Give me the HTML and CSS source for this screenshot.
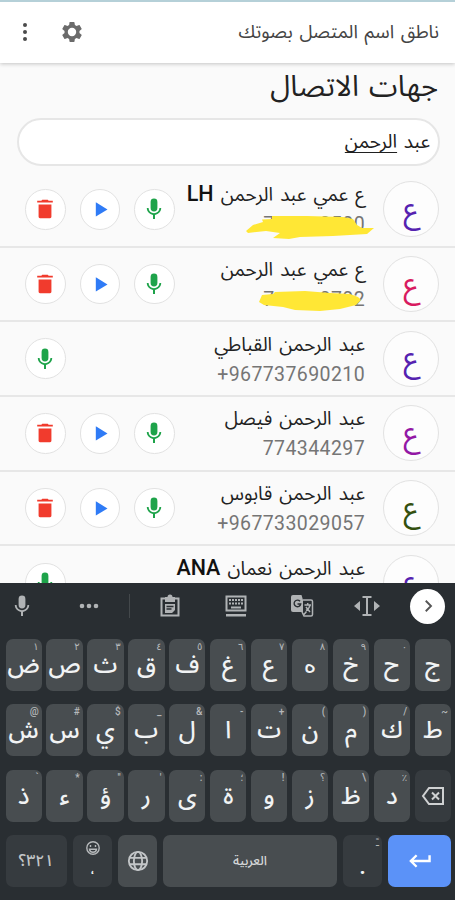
FILE: index.html
```html
<!DOCTYPE html>
<html lang="ar" dir="rtl">
<head>
<meta charset="utf-8">
<title>جهات الاتصال</title>
<link rel="stylesheet" href="styles.css">
</head>
<body>
<svg class="defs" width="0" height="0">
  <symbol id="mic" viewBox="0 0 24 24"><rect x="8.6" y="1.5" width="6.8" height="13" rx="3.4"/><path d="M19.2 11h-1.8c0 3-2.5 5.2-5.4 5.2S6.600 14 6.600 11H4.800c0 3.500 2.700 6.300 6.200 6.900V22h2v-4.100c3.500-.6 6.200-3.400 6.200-6.900z"/></symbol>
  <symbol id="play" viewBox="0 0 24 24"><path d="M7 4v17l14-8.500z"/></symbol>
  <symbol id="trash" viewBox="0 0 24 24"><path d="M5 7h14v13.500a1.500 1.500 0 0 1-1.500 1.500h-11A1.500 1.500 0 0 1 5 20.500zM3.500 3H8l1-1.200h6L16 3h4.500v2h-17z"/></symbol>
</svg>
<div class="screen">
  <header class="bar">
    <span class="bar-title">ناطق اسم المتصل بصوتك</span>
    <svg class="gear" viewBox="0 0 24 24"><path d="M19.430 12.980c.04-.32.07-.64.07-.98s-.03-.66-.07-.98l2.110-1.650c.19-.15.24-.42.12-.64l-2-3.460c-.12-.22-.39-.3-.61-.22l-2.490 1c-.52-.4-1.080-.73-1.690-.98l-.38-2.650A.49.49 0 0 0 14 2h-4c-.25 0-.46.18-.49.42l-.38 2.650c-.61.25-1.170.59-1.690.98l-2.490-1c-.23-.09-.49 0-.61.22l-2 3.460c-.13.22-.07.49.12.64l2.110 1.650c-.04.32-.07.65-.07.98s.03.66.07.98l-2.110 1.650c-.19.15-.24.42-.12.64l2 3.460c.12.22.39.3.61.22l2.490-1c.52.4 1.080.73 1.690.98l.38 2.650c.03.24.24.42.49.42h4c.25 0 .46-.18.49-.42l.38-2.650c.61-.25 1.170-.59 1.690-.98l2.490 1c.23.09.49 0 .61-.22l2-3.460c.12-.22.07-.49-.12-.64zM12 16.200a4.200 4.200 0 1 1 0-8.400 4.200 4.200 0 0 1 0 8.400z"/></svg>
    <svg class="more" viewBox="0 0 6 20"><circle cx="3" cy="3" r="2"/><circle cx="3" cy="10" r="2"/><circle cx="3" cy="17" r="2"/></svg>
  </header>
  <h1>جهات الاتصال</h1>
  <div class="search"><span>عبد <u>الرحمن</u></span></div>
  <main class="list">
    <div class="row">
      <span class="avatar violet">ع</span>
      <div class="who"><div class="name">ع عمي عبد الرحمن <b>LH</b></div><div class="phone" dir="ltr">7<i></i>0500</div>
        <svg class="mark" viewBox="0 0 130 26"><path d="M1 15 8 9 18 6 17 3.500 27 3 27 0 62 0 98 1 108 3 112 9 117 12 129 12 122 18 88 20 55 21 44 23 28 22 35 17 21 15 3 17z"/></svg></div>
      <div class="actions"><span><svg class="green"><use href="#mic"/></svg></span><span><svg class="blue"><use href="#play"/></svg></span><span><svg class="red"><use href="#trash"/></svg></span></div>
    </div>
    <div class="row">
      <span class="avatar pink">ع</span>
      <div class="who"><div class="name">ع عمي عبد الرحمن</div><div class="phone" dir="ltr">7<i></i>0702</div>
        <svg class="mark" viewBox="0 0 130 26"><path d="M14 11 17 4 28 3 30 1 60 0 85 2 105 3 113 6 116 9 111 14 95 18 75 20 50 19 38 16 19 14z"/></svg></div>
      <div class="actions"><span><svg class="green"><use href="#mic"/></svg></span><span><svg class="blue"><use href="#play"/></svg></span><span><svg class="red"><use href="#trash"/></svg></span></div>
    </div>
    <div class="row">
      <span class="avatar violet">ع</span>
      <div class="who"><div class="name">عبد الرحمن القباطي</div><div class="phone" dir="ltr">+967737690210</div></div>
      <div class="actions"><span><svg class="green"><use href="#mic"/></svg></span></div>
    </div>
    <div class="row">
      <span class="avatar purple">ع</span>
      <div class="who"><div class="name">عبد الرحمن فيصل</div><div class="phone" dir="ltr">774344297</div></div>
      <div class="actions"><span><svg class="green"><use href="#mic"/></svg></span><span><svg class="blue"><use href="#play"/></svg></span><span><svg class="red"><use href="#trash"/></svg></span></div>
    </div>
    <div class="row">
      <span class="avatar olive">ع</span>
      <div class="who"><div class="name">عبد الرحمن قابوس</div><div class="phone" dir="ltr">+967733029057</div></div>
      <div class="actions"><span><svg class="green"><use href="#mic"/></svg></span><span><svg class="blue"><use href="#play"/></svg></span><span><svg class="red"><use href="#trash"/></svg></span></div>
    </div>
    <div class="row">
      <span class="avatar violet">ع</span>
      <div class="who"><div class="name">عبد الرحمن نعمان <b>ANA</b></div></div>
      <div class="actions"><span><svg class="green"><use href="#mic"/></svg></span></div>
    </div>
  </main>
  <section class="keyboard" dir="ltr">
    <div class="tools">
      <svg class="t-mic" viewBox="0 0 24 24"><use href="#mic"/></svg>
      <svg class="t-dots" viewBox="0 0 20 6"><circle cx="3" cy="3" r="2.300"/><circle cx="10" cy="3" r="2.300"/><circle cx="17" cy="3" r="2.300"/></svg>
      <span class="sep"></span>
      <svg viewBox="0 0 24 24"><path class="line" d="M3.500 4.500h17v17h-17z"/><path d="M7 3h2.500a2.500 2.500 0 0 1 5 0H17v5H7zM7 10h10v6l-3 3H7z"/><path class="cut" d="M8.500 12.500h7M8.500 15h5"/></svg>
      <svg viewBox="0 0 24 24"><path class="line" d="M2.500 2.500h19v14h-19z"/><path d="M5 5h2v2H5zm3 0h2v2H8zm3 0h2v2h-2zm3 0h2v2h-2zm3 0h2v2h-2zM5 8.500h2v2H5zm3 0h2v2H8zm3 0h2v2h-2zm3 0h2v2h-2zm3 0h2v2h-2zM7 12.500h10v2H7zM2 20h20v2.500H2z"/></svg>
      <svg viewBox="0 0 24 24"><path d="M3 1h8.500l1.500 5v12H3a2 2 0 0 1-2-2V3a2 2 0 0 1 2-2z"/><path class="line thin" d="M13 6h8a1.500 1.500 0 0 1 1.500 1.500v13A1.500 1.500 0 0 1 21 22h-7l-2-4M14.500 11h6.500M17.700 9v2M20 11c-.5 3-2 4.500-4 5.500M16 13l4 5M13.500 21l3-3.500"/><path class="cut" d="M10 7.300A3.300 3.300 0 1 0 10.700 10H7.500"/></svg>
      <svg class="t-cursor" viewBox="0 0 26 24"><path class="line" d="M8.500 3h9M8.500 21h9M13 3v18"/><path d="M6 7v10l-6-5zM20 7v10l6-5z"/></svg>
      <span class="next"><svg viewBox="0 0 24 24"><path d="M9 5l7 7-7 7"/></svg></span>
    </div>
    <div class="keys">
      <span class="key"><sup>١</sup>ض</span><span class="key"><sup>٢</sup>ص</span><span class="key"><sup>٣</sup>ث</span><span class="key"><sup>٤</sup>ق</span><span class="key"><sup>٥</sup>ف</span><span class="key"><sup>٦</sup>غ</span><span class="key"><sup>٧</sup>ع</span><span class="key heh"><sup>٨</sup>ه</span><span class="key"><sup>٩</sup>خ</span><span class="key"><sup>٠</sup>ح</span><span class="key">ج</span>
    </div>
    <div class="keys">
      <span class="key"><sup>@</sup>ش</span><span class="key"><sup>#</sup>س</span><span class="key"><sup>$</sup>ي</span><span class="key"><sup>_</sup>ب</span><span class="key"><sup>&amp;</sup>ل</span><span class="key"><sup>-</sup>ا</span><span class="key"><sup>+</sup>ت</span><span class="key"><sup>(</sup>ن</span><span class="key"><sup>)</sup>م</span><span class="key"><sup>/</sup>ك</span><span class="key"><sup>~</sup>ط</span>
    </div>
    <div class="keys">
      <span class="key"><sup>`</sup>ذ</span><span class="key"><sup>*</sup>ء</span><span class="key"><sup>"</sup>ؤ</span><span class="key"><sup>'</sup>ر</span><span class="key"><sup>:</sup>ى</span><span class="key"><sup>؛</sup>ة</span><span class="key"><sup>!</sup>و</span><span class="key"><sup>؟</sup>ز</span><span class="key"><sup>\</sup>ظ</span><span class="key"><sup>٪</sup>د</span><span class="key dark"><svg class="back" viewBox="0 0 24 20"><path d="M8 2h14v16H8L2 10zM11 6.500l7 7M18 6.500l-7 7"/></svg></span>
    </div>
    <div class="keys bottom">
      <span class="key dark num">؟٣٢١</span>
      <span class="key dark emoji"><svg viewBox="0 0 16 16"><circle cx="8" cy="8" r="6.200"/><path d="M5.500 5v2M10.500 5v2M4.500 9.300h7c-.3 2-1.700 3-3.500 3s-3.200-1-3.500-3z"/></svg><em>،</em></span>
      <span class="key"><svg class="globe" viewBox="0 0 24 24"><circle cx="12" cy="12" r="10"/><ellipse cx="12" cy="12" rx="4.500" ry="10"/><path d="M2.800 8.500h18.400M2.800 15.500h18.400"/></svg></span>
      <span class="key space">العربية</span>
      <span class="key dark dot"><sup>ـً</sup>.</span>
      <span class="key enter"><svg viewBox="0 0 24 16"><path d="M22.500 2v6H3M9 2L3 8l6 6"/></svg></span>
    </div>
  </section>
</div>
</body>
</html>
```
FILE: styles.css
```css
* { box-sizing: border-box; }
body { margin: 0; font-family: Roboto, "Noto Sans Arabic", "DejaVu Sans", sans-serif; color: #202020; }
.defs { position: absolute; }
svg { flex: none; display: block; }
.screen { width: 455px; height: 900px; overflow: hidden; background: #fafafa; display: flex; flex-direction: column; }
.bar { height: 63px; flex: none; background: #fff; border-top: 2px solid #b5d0d8; box-shadow: 0 1px 4px rgba(0,0,0,.22); display: flex; align-items: center; padding: 0 16px 2px 22px; }
.bar-title { font-size: 18.700px; word-spacing: 2px; color: #444; margin-left: auto; white-space: nowrap; }
.gear { width: 24px; height: 24px; fill: #6b6b6b; margin-left: 32px; }
.more { width: 6px; height: 20px; fill: #4b4b4b; }
h1 { margin: 0; height: 55px; flex: none; padding: 0 17px; font-size: 29px; word-spacing: 3px; font-weight: 400; line-height: 46px; white-space: nowrap; color: #222; }
.search { height: 48px; flex: none; margin: 0 15px 0 17px; border: 2px solid #e6e6e6; border-radius: 24px; background: #fff; display: flex; align-items: center; padding: 0 8px; font-size: 19px; word-spacing: 2px; }
.search u { text-decoration-thickness: 1px; text-underline-offset: 4px; }
.list { height: 416.500px; flex: none; padding-top: 7px; overflow: hidden; }
.row { height: 74.700px; border-bottom: 2px solid #e7e7e7; display: flex; align-items: center; padding: 0 16px 0 25px; }
.avatar { width: 56px; height: 56px; flex: none; border: 1.500px solid #e2e2e2; border-radius: 50%; background: #fdfdfd; display: flex; align-items: center; justify-content: center; font-size: 30px; }
.violet { color: #5522b0; }
.pink { color: #d81b60; }
.purple { color: #9318a5; }
.olive { color: #34500f; }
.who { width: 190px; height: 66px; flex: none; margin-right: 18px; position: relative; }
.name { font-size: 19px; word-spacing: 2.500px; height: 38px; line-height: 38px; white-space: nowrap; color: #222; }
.name b { font-size: 21.500px; font-weight: 500; line-height: 1; color: #111; }
.phone { font-size: 19.500px; height: 22px; line-height: 22px; text-align: right; letter-spacing: .4px; color: #757575; }
.phone i { display: inline-block; width: 45px; }
.mark { position: absolute; right: -10px; top: 40px; width: 130px; height: 26px; fill: #ffe735; }
.actions { display: flex; gap: 14px; margin-right: auto; }
.actions span { width: 40.500px; height: 40.500px; border: 1.500px solid #e2e2e2; border-radius: 50%; background: #fff; display: flex; align-items: center; justify-content: center; }
.actions svg { width: 24px; height: 24px; }
.green { fill: #1ea34a; }
.blue { fill: #2f7bf6; padding: 2px; }
.red { fill: #f13b2d; padding: 1px; }
.keyboard { flex: 1; background: #292e32; padding: 0 4px 0 5.500px; color: #f1f3f4; }
.tools { height: 47px; margin-bottom: 9.500px; display: flex; align-items: center; fill: #b0b3b5; }
.tools > svg { width: 24px; height: 24px; margin-right: 42px; }
.tools > .t-mic { margin: 0 45px 0 4.500px; }
.tools > .t-dots { width: 20px; height: 6px; margin-right: 30px; }
.sep { width: 1px; height: 24px; background: #43484b; margin-right: 28px; }
.tools > .t-cursor { width: 26px; margin: 0 30px 0 -2px; }
.line { fill: none; stroke: #b0b3b5; stroke-width: 2; }
.thin { stroke-width: 1.500; }
.cut { fill: none; stroke: #292e32; stroke-width: 1.400; }
.next { width: 35px; height: 35px; flex: none; border-radius: 50%; background: #fff; display: flex; align-items: center; justify-content: center; }
.next svg { width: 18px; fill: none; stroke: #555; stroke-width: 2.500; }
.keys { display: grid; grid-template-columns: repeat(11, 1fr); gap: 4.700px; height: 52px; margin-bottom: 13.300px; }
.key { position: relative; background: #484d50; border-radius: 7px; display: flex; align-items: center; justify-content: center; font-size: 24px; font-weight: 500; line-height: 30px; min-width: 0; }
.heh { font-family: "DejaVu Sans", sans-serif; }
.key sup { position: absolute; top: 2px; right: 3px; font-family: Roboto, "DejaVu Sans", sans-serif; font-size: 10px; line-height: 11px; color: #b5b8ba; }
.dark { background: #363b3f; }
.back { width: 24px; height: 20px; fill: none; stroke: #cfd1d2; stroke-width: 2; }
.bottom { grid-template-columns: 61.500px 39px 39px 174px 39px 62.500px; gap: 6px; }
.num { font-size: 16px; color: #c3c6c8; unicode-bidi: bidi-override; }
.emoji { flex-direction: column; justify-content: flex-start; padding-top: 5px; }
.emoji svg { width: 16px; height: 16px; fill: none; stroke: #b6b9bb; stroke-width: 1.400; }
.emoji em { font-size: 14px; font-style: normal; line-height: 26px; }
.globe { width: 22px; height: 22px; fill: none; stroke: #c3c6c8; stroke-width: 2; }
.space { font-size: 13px; color: #d5d7d8; }
.dot { padding-top: 10px; }
.enter { background: #5b92f8; }
.enter svg { width: 23px; height: 16px; fill: none; stroke: #fff; stroke-width: 2.500; }
```
